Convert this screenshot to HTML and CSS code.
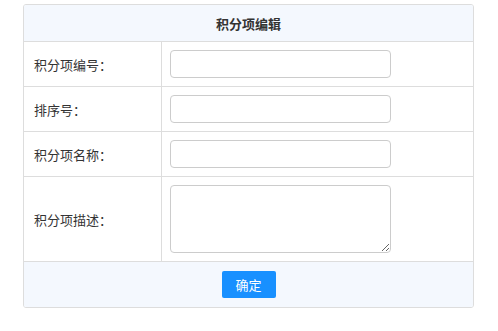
FILE: index.html
```html
<!DOCTYPE html>
<html lang="zh-CN">
<head>
  <meta charset="UTF-8">
  <title>积分项编辑</title>
  <link rel="stylesheet" href="styles.css">
</head>
<body>
  <div class="panel">
    <table class="form-table">
      <colgroup>
        <col class="col-label">
        <col>
      </colgroup>
      <thead>
        <tr><th colspan="2">积分项编辑</th></tr>
      </thead>
      <tbody>
        <tr>
          <td class="label">积分项编号：</td>
          <td class="field"><input type="text" class="input"></td>
        </tr>
        <tr>
          <td class="label">排序号：</td>
          <td class="field"><input type="text" class="input"></td>
        </tr>
        <tr>
          <td class="label">积分项名称：</td>
          <td class="field"><input type="text" class="input"></td>
        </tr>
        <tr>
          <td class="label">积分项描述：</td>
          <td class="field"><textarea class="input textarea"></textarea></td>
        </tr>
      </tbody>
      <tfoot>
        <tr>
          <td colspan="2"><button type="button" class="btn">确定</button></td>
        </tr>
      </tfoot>
    </table>
  </div>
</body>
</html>
```

FILE: styles.css
```css
body {
  margin: 0;
  padding: 4px 24px 0 23px;
  font-family: "Noto Sans CJK SC", "Noto Sans", sans-serif;
  font-size: 13px;
  color: #333;
  background: #fff;
}

.panel {
  width: 451px;
  border: 1px solid #ddd;
  border-radius: 3px;
  overflow: hidden;
  box-sizing: border-box;
}

.form-table {
  width: 100%;
  border-collapse: collapse;
  table-layout: fixed;
}

.col-label {
  width: 137px;
}

.form-table th {
  height: 36px;
  padding: 0;
  background: #f4f8fe;
  font-weight: bold;
  font-size: 13px;
  border-bottom: 1px solid #ddd;
}

.form-table td {
  padding: 8px;
  border-bottom: 1px solid #ddd;
}

.form-table td.label {
  padding-left: 10px;
  border-right: 1px solid #ddd;
}

.field {
  height: 28px;
}

.input {
  display: block;
  width: 221px;
  height: 28px;
  margin: 0;
  padding: 4px 8px;
  box-sizing: border-box;
  border: 1px solid #ccc;
  border-radius: 4px;
  font: inherit;
}

.textarea {
  height: 68px;
}

.form-table tfoot td {
  height: 29px;
  padding: 8px;
  text-align: center;
  background: #f4f8fe;
  border-bottom: none;
}

.btn {
  width: 54px;
  height: 27px;
  padding: 0;
  border: none;
  border-radius: 2px;
  background: #1890ff;
  color: #fff;
  font: inherit;
  cursor: pointer;
}
```
